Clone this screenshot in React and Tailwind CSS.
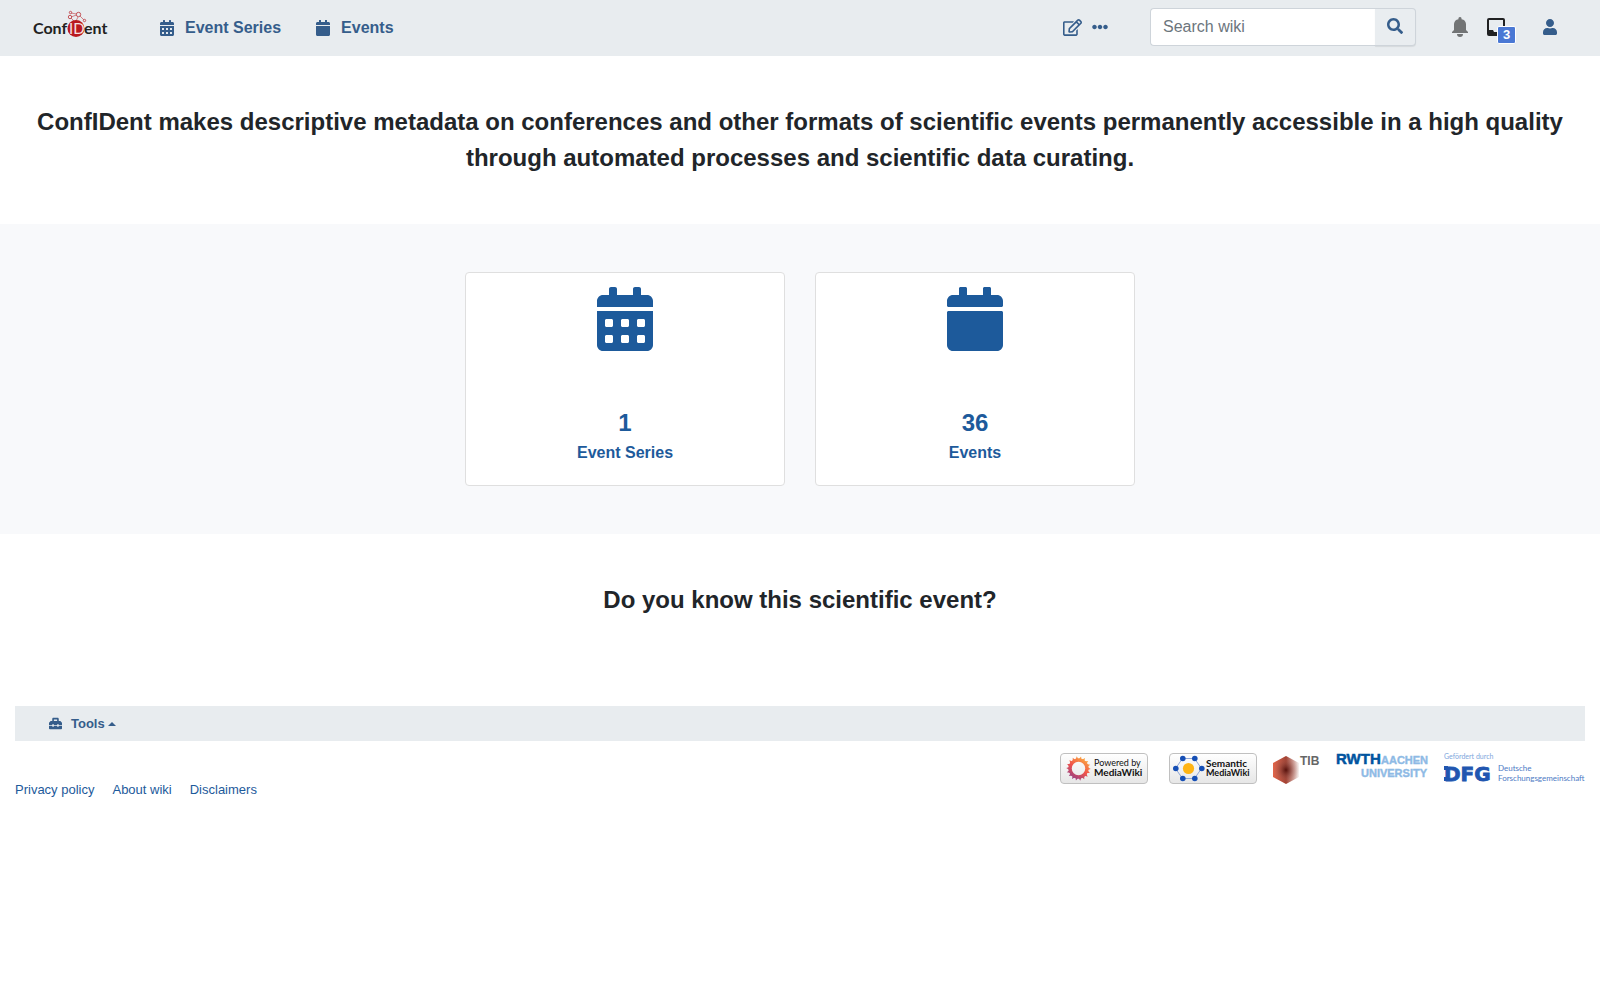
import React from 'react';
import { FaCalendarAlt, FaCalendar, FaRegEdit, FaEllipsisH, FaSearch, FaUser, FaToolbox } from 'react-icons/fa';

function ConfidentLogo() {
  return (
    <svg width="76" height="36" viewBox="0 0 76 36" role="img" aria-label="ConfIDent">
      <g fill="none" stroke="#c0444a" strokeWidth="0.9">
        <path d="M38 3 L43.500 4 M38 7 L43.500 5 M47 6 L51 10 M38 8 L41 11 M45 7 L43 11" opacity="0.7" />
        <circle cx="37.500" cy="2.500" r="1.200" />
        <circle cx="37" cy="7" r="1.700" />
        <circle cx="45.500" cy="4.500" r="2.200" />
        <circle cx="51.500" cy="10.500" r="1.200" />
      </g>
      <circle cx="43" cy="18.500" r="8.500" fill="#b9191f" />
      <g fontFamily="Lato, sans-serif" fontSize="16" fontWeight="700">
        <text x="0" y="24" fill="#222">Conf</text>
        <text x="36" y="24" fontSize="15" fill="#f7e2e2" fontWeight="400">ID</text>
        <text x="51" y="24" fill="#222">ent</text>
      </g>
    </svg>
  );
}

const petals = Array.from({ length: 18 }, (_, i) => i * 20);
const nodes = [[6.5, 15.5], [13.5, 5.5], [25.5, 5.5], [32.5, 15.5], [25.5, 25.5], [13.5, 25.5]];

function PoweredBy() {
  return (
    <svg width="88" height="31" viewBox="0 0 88 31" role="img" aria-label="Powered by MediaWiki">
      <defs>
        <linearGradient id="badge" x1="0" y1="0" x2="0" y2="1">
          <stop offset="0" stopColor="#ffffff" />
          <stop offset="1" stopColor="#e6e6e6" />
        </linearGradient>
        <linearGradient id="flower" gradientUnits="userSpaceOnUse" x1="25" y1="4" x2="11" y2="27">
          <stop offset="0" stopColor="#fcb040" />
          <stop offset="0.500" stopColor="#f0524a" />
          <stop offset="1" stopColor="#8b3f8f" />
        </linearGradient>
      </defs>
      <rect x="0.500" y="0.500" width="87" height="30" rx="3.500" fill="url(#badge)" stroke="#c0c0c0" />
      <circle cx="18.500" cy="15.500" r="8.500" fill="none" stroke="url(#flower)" strokeWidth="3.500" />
      <g fill="url(#flower)">
        <path
          d={petals
            .map((a) => {
              const p = (r, d) => {
                const t = ((a + d) * Math.PI) / 180;
                return `${18.5 + r * Math.cos(t)} ${15.5 + r * Math.sin(t)}`;
              };
              return `M${p(9, -10)}L${p(12.3, 2)}L${p(9, 10)}Z`;
            })
            .join('')}
        />
      </g>
      <g fontFamily="Lato, sans-serif" fill="#111">
        <text x="34" y="13" fontSize="9">Powered by</text>
        <text x="34" y="23" fontSize="10" fontWeight="700">MediaWiki</text>
      </g>
    </svg>
  );
}

function SemanticWiki() {
  return (
    <svg width="88" height="31" viewBox="0 0 88 31" role="img" aria-label="Semantic MediaWiki">
      <rect x="0.500" y="0.500" width="87" height="30" rx="3.500" fill="url(#badge)" stroke="#c0c0c0" />
      <polygon points={nodes.map((p) => p.join(',')).join(' ')} fill="none" stroke="#8ea6d8" />
      {nodes.map(([x, y]) => <circle key={`${x}-${y}`} cx={x + 0.3} cy={y} r="2.800" fill="#164fb5" />)}
      <circle cx="19.500" cy="15.500" r="5.600" fill="#ffb414" />
      <g fontFamily="Lato, sans-serif" fill="#111" fontWeight="700">
        <text x="37" y="14" fontSize="10">Semantic</text>
        <text x="37" y="23" fontSize="9">MediaWiki</text>
      </g>
    </svg>
  );
}

function Tib() {
  return (
    <svg width="49" height="32" viewBox="0 0 49 32" role="img" aria-label="TIB">
      <defs>
        <linearGradient id="cube">
          <stop offset="0" stopColor="#e2654a" />
          <stop offset="0.500" stopColor="#a03a2a" />
          <stop offset="1" stopColor="#f6f3f2" />
        </linearGradient>
        <radialGradient id="core">
          <stop offset="0" stopColor="#4f0c08" stopOpacity="0.900" />
          <stop offset="1" stopColor="#c98a80" stopOpacity="0" />
        </radialGradient>
      </defs>
      <polygon points="14,3 27,10 27,24 14,31 1,24 1,10" fill="url(#cube)" />
      <polygon points="14,3 27,10 27,24 14,31 1,24 1,10" fill="url(#core)" />
      <text x="28" y="12" fontFamily="'Liberation Sans', sans-serif" fontSize="12" fontWeight="700" fill="#666">TIB</text>
    </svg>
  );
}

function Rwth() {
  return (
    <svg width="93" height="26" viewBox="0 0 93 26" role="img" aria-label="RWTH Aachen University">
      <g fontFamily="'Liberation Sans', sans-serif" fontWeight="700">
        <text x="0" y="11" fontSize="15" fill="#00549f" stroke="#00549f" strokeWidth="0.500">RWTH</text>
        <g fill="#8ebae5" stroke="#8ebae5" strokeWidth="0.400">
          <text x="45" y="11" fontSize="11">AACHEN</text>
          <text x="25" y="24" fontSize="11">UNIVERSITY</text>
        </g>
      </g>
    </svg>
  );
}

function Dfg() {
  return (
    <svg width="141" height="32" viewBox="0 0 141 32" role="img" aria-label="Gefördert durch DFG Deutsche Forschungsgemeinschaft">
      <g fontFamily="Lato, sans-serif" fill="#4c7ac4">
        <text x="0" y="6" fontSize="7" fill="#7ea6dc">Gefördert durch</text>
        <text x="54" y="18" fontSize="8">Deutsche</text>
        <text x="54" y="28" fontSize="8">Forschungsgemeinschaft</text>
      </g>
      <rect x="0" y="13" width="4" height="4" fill="#2156b0" />
      <rect x="0" y="24" width="4" height="4" fill="#2156b0" />
      <text x="0" y="28" fontFamily="'DejaVu Sans', sans-serif" fontWeight="700" fontSize="20" fill="#2156b0" stroke="#2156b0" strokeWidth="0.800">DFG</text>
    </svg>
  );
}

function BellIcon() {
  return (
    <svg width="20" height="20" viewBox="0 0 20 20" fill="#727475" aria-hidden="true">
      <path d="M16 7a5.380 5.380 0 0 0-4.460-4.850C11.600 1.460 11.530 0 10 0S8.400 1.460 8.460 2.150A5.380 5.380 0 0 0 4 7v6l-2 2v1h16v-1l-2-2zm-6 13a3 3 0 0 0 3-3H7a3 3 0 0 0 3 3" />
    </svg>
  );
}

function TrayIcon() {
  return (
    <svg width="20" height="20" viewBox="0 0 20 20" fill="#202122" aria-hidden="true">
      <path d="M3 1a2 2 0 0 0-2 2v14a2 2 0 0 0 2 2h14a2 2 0 0 0 2-2V3a2 2 0 0 0-2-2zm14 12h-4l-1 2H8l-1-2H3V3h14z" />
    </svg>
  );
}

function Header() {
  return (
    <header className="flex h-14 items-center bg-[#e8ecef] pr-[42px] pl-[33px] text-[#355d8b]">
      <a href="#" className="mr-[50px]"><ConfidentLogo /></a>
      <nav className="flex gap-[34px] text-base font-bold">
        <a href="#" className="flex items-center gap-2.5"><FaCalendarAlt />Event Series</a>
        <a href="#" className="flex items-center gap-2.5"><FaCalendar />Events</a>
      </nav>
      <div className="ml-auto flex items-center pb-0.5">
        <a href="#" aria-label="Edit" className="mr-2.5"><FaRegEdit size={19} /></a>
        <button type="button" aria-label="More actions" className="mr-[42px]"><FaEllipsisH /></button>
        <form role="search" className="mr-[34px] flex h-[38px] w-[266px]" onSubmit={(e) => e.preventDefault()}>
          <input
            type="search"
            aria-label="Search wiki"
            placeholder="Search wiki"
            className="min-w-0 flex-1 rounded-l border border-r-0 border-[#ced4da] bg-white px-3 text-base placeholder:text-[#6c757d]"
          />
          <button
            type="submit"
            aria-label="Search"
            className="flex w-[41px] items-center justify-center rounded-r border border-l-0 border-[#ced4da] bg-[#e9edf0] pb-0.5 shadow-[0_1px_1px_rgba(0,0,0,0.08)]"
          >
            <FaSearch />
          </button>
        </form>
        <button type="button" aria-label="Alerts" className="mr-4"><BellIcon /></button>
        <button type="button" aria-label="Notices" className="relative mr-9">
          <TrayIcon />
          <span className="absolute top-[9px] left-[11px] flex h-[18px] w-[19px] items-center justify-center rounded-xs border border-white bg-[#4a78d4] text-[13px] font-bold text-white">
            3
          </span>
        </button>
        <button type="button" aria-label="User menu"><FaUser /></button>
      </div>
    </header>
  );
}

function StatCard({ icon, count, label }) {
  return (
    <a href="#" className="flex w-80 flex-col items-center rounded border border-[#dfdfdf] bg-white pt-3.5 pb-5 text-[#1d5a9b]">
      {icon}
      <span className="mt-[54px] text-2xl leading-9 font-bold">{count}</span>
      <span className="text-base font-bold">{label}</span>
    </a>
  );
}

export default function App() {
  return (
    <div className="mr-[15px] bg-white text-[#212529] [font-family:'Liberation_Sans',Arial,sans-serif]">
      <Header />
      <main>
        <h1 className="px-[15px] py-12 text-center text-2xl leading-9 font-bold">
          ConfIDent makes descriptive metadata on conferences and other formats of scientific events permanently accessible in a high quality through automated processes and scientific data curating.
        </h1>
        <section className="flex justify-center gap-[30px] bg-[#f8f9fb] py-12">
          <StatCard icon={<FaCalendarAlt size={64} />} count="1" label="Event Series" />
          <StatCard icon={<FaCalendar size={64} />} count="36" label="Events" />
        </section>
        <h2 className="py-12 text-center text-2xl leading-9 font-bold">Do you know this scientific event?</h2>
      </main>
      <footer className="mt-10 px-[15px] text-[13px] leading-5">
        <div className="flex h-[35px] items-center bg-[#e8ecef] pl-[34px] text-[#355d8b]">
          <button type="button" className="flex items-center font-bold">
            <FaToolbox size={13} className="mr-[9px]" />
            Tools
            <span className="ml-[3px] border-x-4 border-b-4 border-x-transparent border-b-[#355d8b]" />
          </button>
        </div>
        <div className="mt-3 flex items-start justify-between">
          <nav className="mt-[27px] flex gap-[18px] text-[#1d5a9b]">
            <a href="#">Privacy policy</a>
            <a href="#">About wiki</a>
            <a href="#">Disclaimers</a>
          </nav>
          <div className="flex items-start gap-[15px]">
            <a href="#" className="mr-1.5"><PoweredBy /></a>
            <a href="#"><SemanticWiki /></a>
            <a href="#"><Tib /></a>
            <a href="#"><Rwth /></a>
            <a href="#"><Dfg /></a>
          </div>
        </div>
      </footer>
    </div>
  );
}
